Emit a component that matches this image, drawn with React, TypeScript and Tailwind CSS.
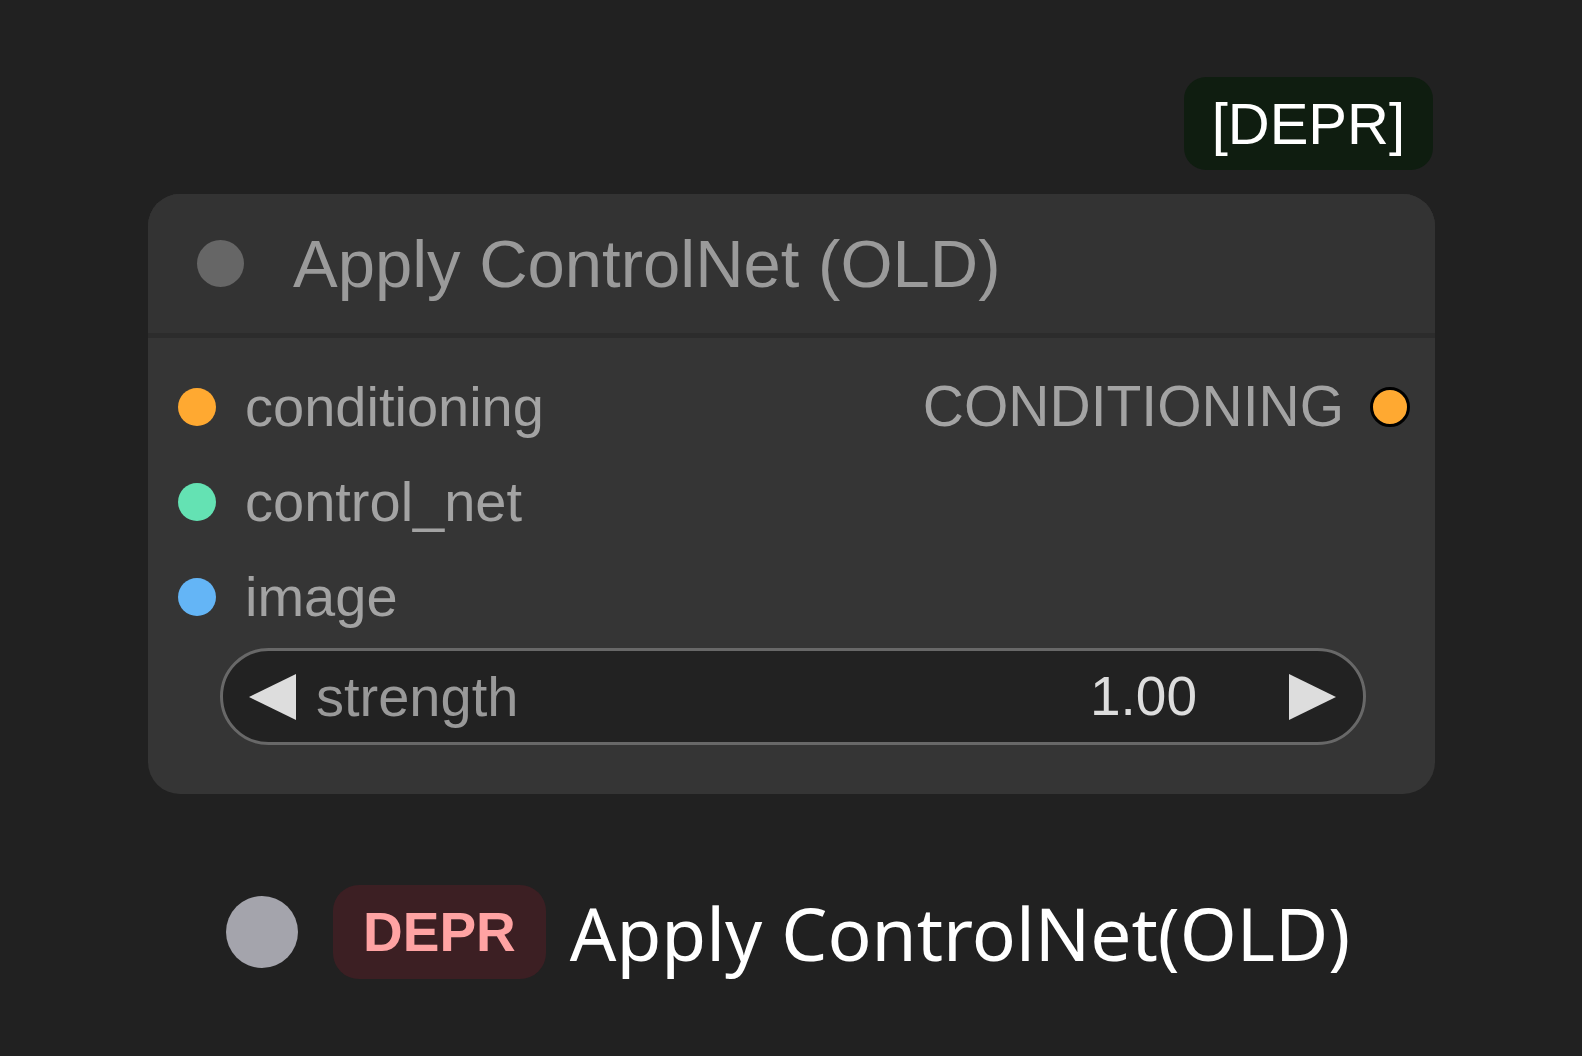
import type { ReactNode } from 'react'

const arial = "font-['Liberation_Sans',Arial,sans-serif]"

const inputs = [
  { name: 'conditioning', color: 'bg-[#ffa931]' },
  { name: 'control_net', color: 'bg-[#64e2b3]' },
  { name: 'image', color: 'bg-[#64b5f6]' },
]

function Row({ children }: { children: ReactNode }) {
  return <div className="h-[95px] flex items-center pl-[30px] pr-[25px]">{children}</div>
}

function Arrow({ dir }: { dir: 'left' | 'right' }) {
  return (
    <svg width="47" height="46" viewBox="0 0 47 46" className="shrink-0">
      <polygon points={dir === 'left' ? '0,23 47,0 47,46' : '47,23 0,0 0,46'} fill="#dddddd" />
    </svg>
  )
}

export default function App() {
  return (
    <div className={`min-h-[1056px] w-full bg-[#212121] ${arial}`}>
      <div className="ml-[148px] w-[1287px] pt-[77px] flex flex-col">
        <div className="self-end mr-[2px] h-[93px] px-[28px] rounded-[22px] bg-[#0f1d10] flex items-center">
          <span className="text-[58px] leading-none text-white">[DEPR]</span>
        </div>

        <div className="mt-[24px] rounded-[32px] overflow-hidden bg-[#353535]">
          <div className="h-[144px] bg-[#333333] border-b-[5px] border-[#2c2c2c] flex items-center">
            <div className="ml-[49px] w-[47px] h-[47px] rounded-full bg-[#666666] shrink-0" />
            <span className="ml-[49px] text-[67px] leading-none text-[#9a9a9a]">Apply ControlNet (OLD)</span>
          </div>

          <div className="pt-[21px] pb-[49px]">
            {inputs.map((inp, i) => (
              <Row key={inp.name}>
                <div className={`w-[38px] h-[38px] rounded-full ${inp.color} shrink-0`} />
                <span className="ml-[29px] text-[56px] leading-none text-[#a3a3a3]">{inp.name}</span>
                {i === 0 && (
                  <div className="ml-auto flex items-center">
                    <span className="text-[57px] leading-none text-[#a3a3a3]">CONDITIONING</span>
                    <div className="ml-[26px] w-[40px] h-[40px] rounded-full bg-[#ffa931] border-[3px] border-black shrink-0" />
                  </div>
                )}
              </Row>
            ))}

            <div className="mt-[4px] ml-[72px] mr-[69px] h-[97px] rounded-full border-[3px] border-[#686868] bg-[#222222] flex items-center pl-[26px] pr-[27px]">
              <Arrow dir="left" />
              <span className="ml-[20px] text-[56px] leading-none text-[#999999]">strength</span>
              <span className="ml-auto text-[55px] leading-none text-[#dddddd]">1.00</span>
              <div className="ml-[92px]">
                <Arrow dir="right" />
              </div>
            </div>
          </div>
        </div>

        <div className="mt-[91px] flex items-center">
          <div className="ml-[78px] w-[72px] h-[72px] rounded-full bg-[#a4a4ac] shrink-0" />
          <div className="ml-[35px] h-[94px] px-[30px] rounded-[26px] bg-[#3c1f23] flex items-center">
            <span className="text-[55px] leading-none font-bold text-[#ffa3a3]">DEPR</span>
          </div>
          <span className="ml-[24px] font-['Noto_Sans',sans-serif] text-[73px] leading-none text-white">
            Apply ControlNet(OLD)
          </span>
        </div>
      </div>
    </div>
  )
}
